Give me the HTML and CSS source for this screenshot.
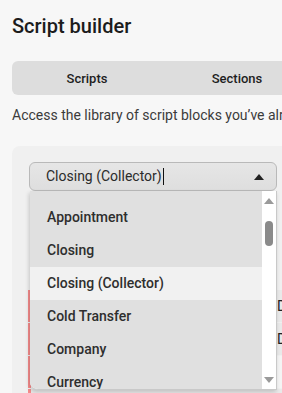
FILE: index.html
```html
<!DOCTYPE html>
<html lang="en">
<head>
  <meta charset="UTF-8">
  <meta name="viewport" content="width=device-width, initial-scale=1.0">
  <title>Script builder</title>
  <link rel="stylesheet" href="styles.css">
</head>
<body>

  <h1>Script builder</h1>

  <!-- Tabs -->
  <div class="tabs">
    <div class="tab">Scripts</div>
    <div class="tab">Sections</div>
  </div>

  <p class="desc">Access the library of script blocks you’ve already created</p>

  <div class="panel">
    <!-- Section picker -->
    <div class="picker">
      <div class="select">
        <span class="value">Closing (Collector)<span class="caret"></span></span>
        <svg class="arrow" width="10" height="6" viewBox="0 0 10 6"><path d="M0 6 L5 0 L10 6 Z" fill="#222"/></svg>
      </div>

      <div class="options">
        <ul>
          <li>Appointment</li>
          <li>Closing</li>
          <li class="active">Closing (Collector)</li>
          <li>Cold Transfer</li>
          <li>Company</li>
          <li>Currency</li>
        </ul>
        <div class="scrollbar">
          <svg width="10" height="7" viewBox="0 0 10 7"><path d="M0 7 L5 1 L10 7 Z" fill="#9a9a9a"/></svg>
          <div class="thumb"></div>
          <svg class="down" width="10" height="7" viewBox="0 0 10 7"><path d="M0 0 L5 6 L10 0 Z" fill="#9a9a9a"/></svg>
        </div>
      </div>
    </div>

    <!-- Blocks behind the list -->
    <div class="blocks">
      <div class="block"><span class="label">Opening line</span><span class="type">Default</span></div>
      <div class="block"><span class="label">Closing line</span><span class="type">Default</span></div>
      <div class="block plain"><span class="label">Callback</span></div>
      <div class="block last"><span class="label">cu<i class="dot"></i>tomer</span></div>
    </div>
  </div>

</body>
</html>
```

FILE: styles.css
```css
body {
  margin: 0;
  padding: 14px 0 0 12px;
  background-color: #f7f7f7;
  font-family: Roboto, "Liberation Sans", sans-serif;
  color: #222;
  overflow: hidden;
  height: 393px;
  box-sizing: border-box;
}

h1 {
  margin: 0;
  font-size: 20px;
  line-height: 24px;
  font-weight: 500;
  color: #1c1c1c;
}

.tabs {
  display: flex;
  width: 300px;
  height: 34px;
  margin-top: 23px;
  background-color: #dddddd;
  border-radius: 6px;
}

.tab {
  width: 150px;
  display: flex;
  align-items: center;
  justify-content: center;
  font-size: 13px;
  font-weight: 500;
  color: #1e1e1e;
}

.desc {
  margin: 10px 0 0;
  font-size: 14px;
  line-height: 20px;
  color: #3b3b3b;
  white-space: nowrap;
}

.panel {
  margin-top: 21px;
  width: 300px;
  height: 300px;
  padding: 16px 0 0 17px;
  background-color: #f0f0f0;
  border-radius: 8px;
  box-sizing: border-box;
}

.picker {
  position: relative;
  width: 248px;
  z-index: 2;
}

.select {
  height: 29px;
  box-sizing: border-box;
  display: flex;
  align-items: center;
  justify-content: space-between;
  padding: 0 12px 0 16px;
  background: linear-gradient(#e6e6e6, #dedede);
  border: 1px solid #b9b9b9;
  border-radius: 6px;
  font-size: 14px;
  color: #2b2b2b;
}

.caret {
  display: inline-block;
  width: 1px;
  height: 17px;
  margin-left: 1px;
  vertical-align: -4px;
  background-color: #111;
}

.options {
  position: absolute;
  top: 29px;
  left: 1px;
  width: 246px;
  height: 198px;
  display: flex;
  background-color: #fff;
  border-right: 1px solid #c9c9c9;
  border-bottom: 1px solid #c9c9c9;
  border-radius: 0 0 0 8px;
  box-shadow: -1px 2px 4px rgba(0, 0, 0, 0.18);
  overflow: hidden;
}

.options ul {
  list-style: none;
  margin: 0;
  padding: 10px 0 0;
  flex: 1;
  background-color: #e0e0e0;
}

.options li {
  height: 33px;
  line-height: 33px;
  padding-left: 17px;
  font-size: 14px;
  font-weight: 500;
  color: #2e2e2e;
}

.options li.active {
  background-color: #f1f1f1;
}

.scrollbar {
  width: 14px;
  display: flex;
  flex-direction: column;
  align-items: center;
  padding-top: 6px;
  background-color: #fff;
}

.thumb {
  width: 8px;
  height: 25px;
  margin-top: 17px;
  background-color: #8a8a8a;
  border-radius: 4px;
}

.scrollbar .down {
  margin-top: auto;
  margin-bottom: 5px;
}

.blocks {
  margin: 99px 0 0 -1px;
}

.block {
  display: flex;
  height: 32px;
  margin-bottom: 1px;
  align-items: center;
  border-left: 3px solid #f58b8b;
  background-color: #e9e9e9;
  font-size: 14px;
  white-space: nowrap;
}

.block.plain {
  background-color: #f4f4f4;
}

.block.last {
  align-items: flex-start;
  padding-top: 1px;
}

.block .label {
  flex-shrink: 0;
  width: 245px;
  padding-left: 20px;
  box-sizing: border-box;
}

.block .type {
  flex-shrink: 0;
  padding-left: 1px;
  color: #222;
}

.dot {
  display: inline-block;
  width: 4px;
  height: 8px;
  background-color: #e89a5c;
}
```
